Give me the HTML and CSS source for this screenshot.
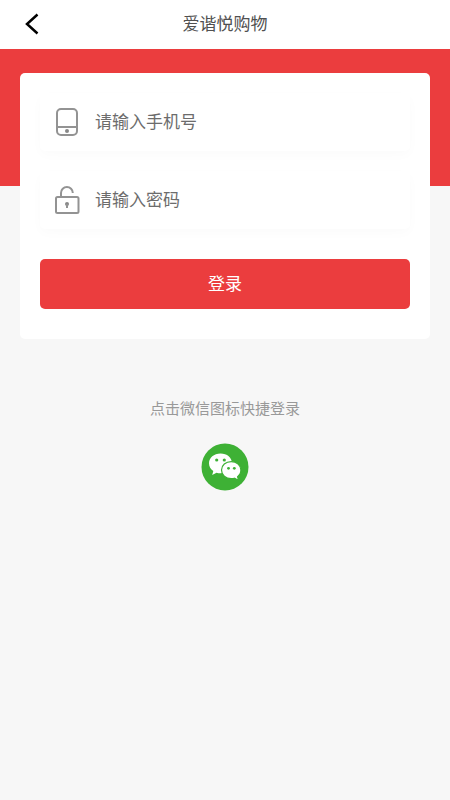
FILE: index.html
```html
<!DOCTYPE html>
<html lang="zh-CN">
<head>
<meta charset="utf-8">
<meta name="viewport" content="width=device-width, initial-scale=1">
<title>爱谐悦购物</title>
<link rel="stylesheet" href="styles.css">
</head>
<body>
<header class="topbar">
  <button class="back" type="button" aria-label="返回">
    <svg width="14" height="22" viewBox="0 0 14 22" aria-hidden="true"><path d="M12.500 1.500 2 11l10.500 9.500"/></svg>
  </button>
  <h1 class="title">爱谐悦购物</h1>
</header>
<main class="page">
  <form class="card">
    <label class="field">
      <svg class="field-icon" width="26" height="30" viewBox="0 0 26 30" aria-hidden="true">
        <rect x="3" y="2" width="20" height="26" rx="4"/>
        <path d="M3 20h20"/>
        <circle class="solid" cx="13" cy="24" r="2"/>
      </svg>
      <input class="input" type="tel" placeholder="请输入手机号" aria-label="手机号">
    </label>
    <label class="field">
      <svg class="field-icon" width="26" height="30" viewBox="0 0 26 30" aria-hidden="true">
        <rect x="2" y="12" width="22.500" height="16" rx="1.500"/>
        <path d="M7 12V8a5.800 5.800 0 0 1 11.800 0"/>
        <circle class="solid" cx="13" cy="19" r="2"/>
        <path d="M13 19v4"/>
      </svg>
      <input class="input" type="password" placeholder="请输入密码" aria-label="密码">
    </label>
    <button class="submit" type="submit">登录</button>
  </form>
  <section class="quick">
    <p class="hint">点击微信图标快捷登录</p>
    <button class="wechat" type="button" aria-label="微信登录">
      <svg width="48" height="48" viewBox="0 0 48 48" aria-hidden="true">
        <circle cx="24" cy="24" r="23.500" fill="#3eb135"/>
        <path fill="#fff" d="M19.500 10.500C12.900 10.500 8 14.800 8 20.300c0 3.200 1.600 5.900 4.300 7.700L11.200 32l4.300-2.300c1.300.4 2.700.5 4 .5 6.600 0 11.500-4.300 11.500-9.900s-4.900-9.800-11.500-9.800z"/>
        <path fill="#fff" stroke="#3eb135" stroke-width="1.200" d="M30.200 18.600c-5.500 0-9.700 3.700-9.700 8.500s4.200 8.600 9.700 8.600c1.200 0 2.300-.2 3.300-.5l4.100 2.300-1-3.800c2.100-1.600 3.300-3.900 3.300-6.600 0-4.800-4.200-8.500-9.700-8.500z"/>
        <g fill="#3eb135">
          <circle cx="15.700" cy="17" r="1.600"/><circle cx="23.300" cy="17" r="1.600"/>
          <circle cx="27.500" cy="25.300" r="1.400"/><circle cx="33.300" cy="25.300" r="1.400"/>
        </g>
      </svg>
    </button>
  </section>
</main>
</body>
</html>
```
FILE: styles.css
```css
* {
  box-sizing: border-box;
}

body {
  margin: 0;
  min-height: 100vh;
  background: #f7f7f7;
  color: #505050;
  font-family: "Noto Sans CJK SC", sans-serif;
}

button,
input {
  padding: 0;
  border: 0;
  background: none;
  font: inherit;
}

button {
  cursor: pointer;
}

.topbar {
  display: grid;
  grid-template-columns: 64px 1fr 64px;
  align-items: center;
  height: 49px;
  padding-bottom: 2px;
  background: #fff;
}

.back {
  display: flex;
  justify-content: center;
}

.back path {
  fill: none;
  stroke: #000;
  stroke-width: 2.5;
}

.title {
  margin: 0;
  padding-bottom: 2px;
  font-size: 17px;
  font-weight: 400;
  line-height: 24px;
  text-align: center;
}

.page {
  padding: 24px 20px;
  background: linear-gradient(#eb3d3e, #eb3d3e) top / 100% 137px no-repeat;
}

.card {
  display: flex;
  flex-direction: column;
  gap: 20px;
  padding: 20px 20px 30px;
  border-radius: 5px;
  background: #fff;
}

.field {
  display: flex;
  align-items: center;
  gap: 15px;
  height: 58px;
  padding: 0 14px;
  border-radius: 5px;
  box-shadow: 0 4px 12px rgba(0, 0, 0, 0.02);
}

.field-icon {
  flex: none;
  fill: none;
  stroke: #939393;
  stroke-width: 2;
}

.field-icon .solid {
  fill: #888;
  stroke: none;
}

.input {
  flex: 1;
  min-width: 0;
  height: 30px;
  padding-bottom: 4px;
  color: #444;
  font-size: 17px;
  outline: none;
}

.input::placeholder {
  color: #6c6c6c;
  opacity: 1;
}

.submit {
  height: 50px;
  margin-top: 10px;
  padding-bottom: 4px;
  border-radius: 5px;
  background: #eb3d3e;
  color: #fff;
  font-size: 17px;
}

.quick {
  display: flex;
  flex-direction: column;
  align-items: center;
  gap: 24px;
  padding-top: 58px;
}

.hint {
  margin: 0;
  color: #999;
  font-size: 15px;
  line-height: 22px;
}

.wechat {
  display: flex;
}
```
